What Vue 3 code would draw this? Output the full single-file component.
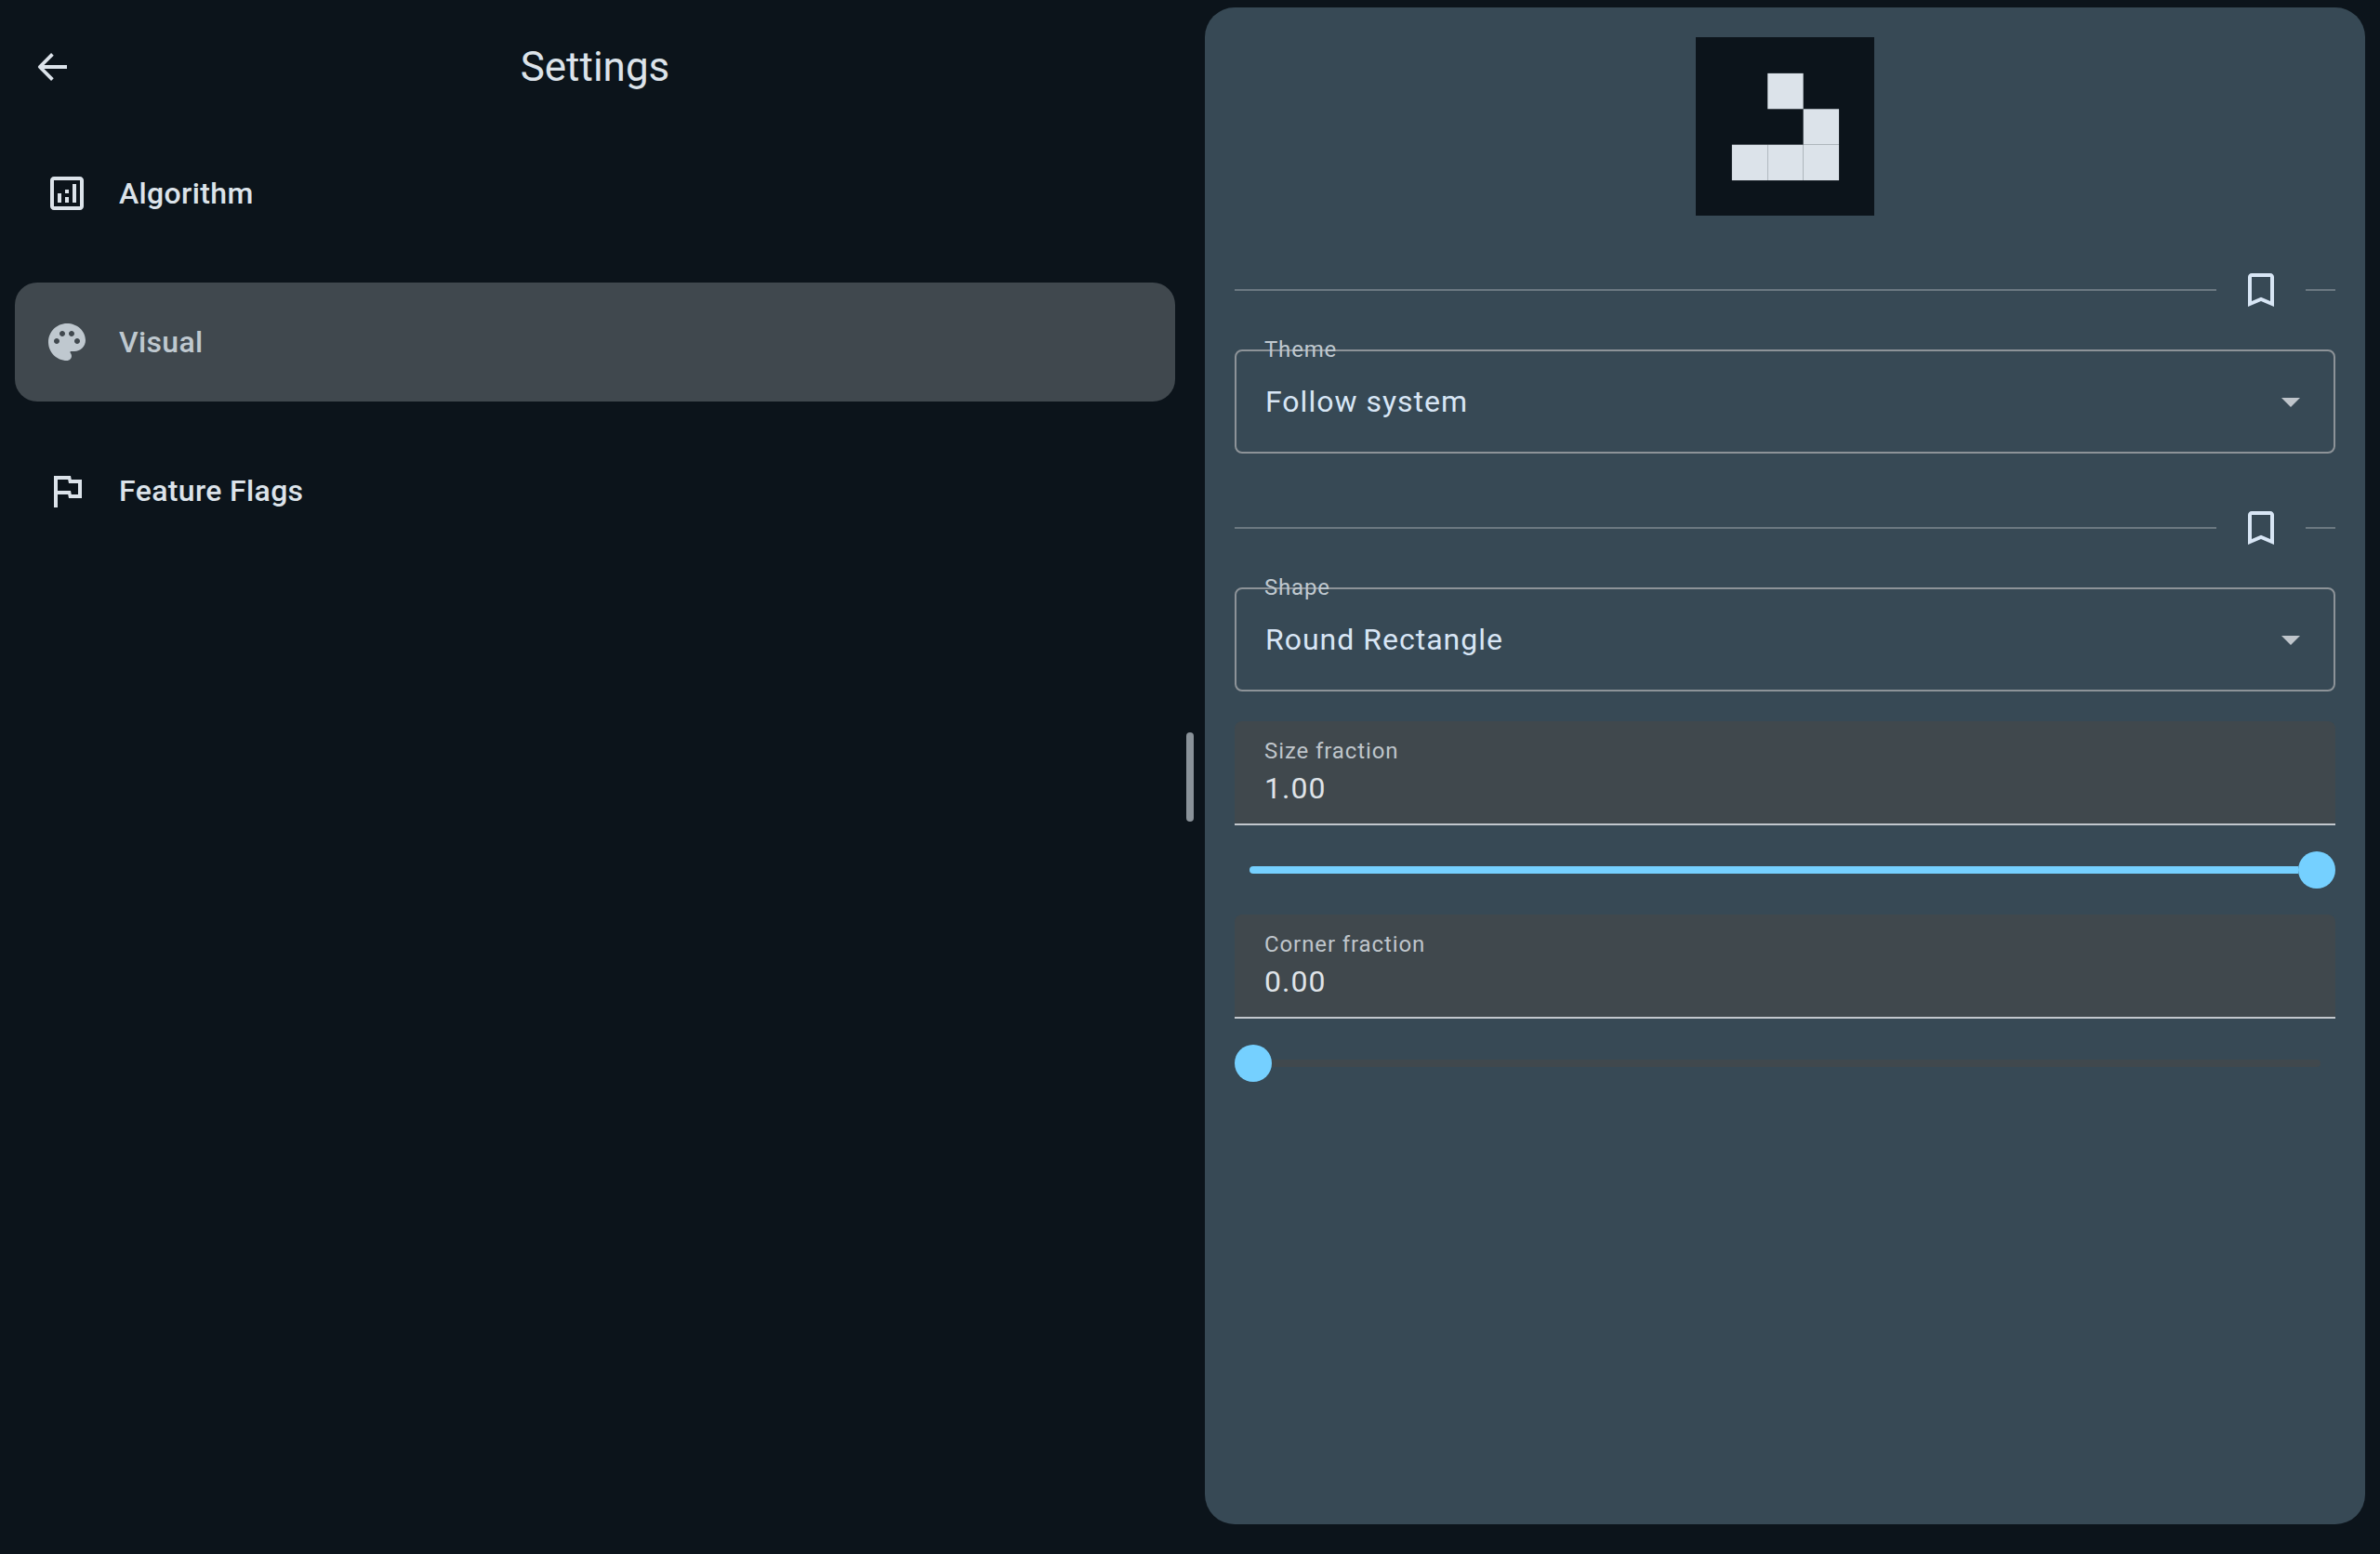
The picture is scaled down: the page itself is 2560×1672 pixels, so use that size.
<script setup>
const menu = [
  { label: 'Algorithm', paths: ['M19 3H5c-1.1 0-2 .9-2 2v14c0 1.1.9 2 2 2h14c1.1 0 2-.9 2-2V5c0-1.1-.9-2-2-2zm0 16H5V5h14v14z', 'M7 12h2v5H7zm8-5h2v10h-2zm-4 7h2v3h-2zm0-4h2v2h-2z'] },
  { label: 'Visual', active: true, paths: ['M12 2C6.49 2 2 6.49 2 12s4.49 10 10 10c1.38 0 2.5-1.12 2.5-2.5 0-.61-.23-1.2-.64-1.67-.08-.1-.13-.21-.13-.33 0-.28.22-.5.5-.5H16c3.31 0 6-2.69 6-6 0-4.96-4.49-9-10-9zm-5.5 11c-.83 0-1.5-.67-1.5-1.5S5.67 10 6.5 10s1.5.67 1.5 1.5S7.33 13 6.5 13zm3-4C8.67 9 8 8.33 8 7.5S8.67 6 9.5 6s1.5.67 1.5 1.5S10.33 9 9.5 9zm5 0c-.83 0-1.5-.67-1.5-1.5S13.67 6 14.5 6s1.5.67 1.5 1.5S15.33 9 14.5 9zm3 4c-.83 0-1.5-.67-1.5-1.5s.67-1.5 1.5-1.5 1.5.67 1.5 1.5-.67 1.5-1.5 1.5z'] },
  { label: 'Feature Flags', paths: ['M14.4 6L14 4H5v17h2v-7h5.6l.4 2h7V6h-5.6zM18 14h-3.6l-.4-2H7V6h5.6l.4 2H18v6z'] }
]
const cells = [[2, 1], [3, 2], [1, 3], [2, 3], [3, 3]]
const bookmark = 'M17 3H7c-1.1 0-2 .9-2 2v16l7-3 7 3V5c0-1.1-.9-2-2-2zm0 15l-5-2.18L7 18V5h10v13z'
</script>

<template>
  <div class="page">
    <section class="left">
      <header class="top">
        <svg class="icon" viewBox="0 0 24 24">
          <path class="arrow" d="M20 12H5.4M12.2 5.2L5.4 12l6.8 6.8" />
        </svg>
        <h1 class="title">Settings</h1>
        <span></span>
      </header>
      <nav class="menu">
        <div v-for="item in menu" :key="item.label" class="row" :class="{ active: item.active }">
          <svg class="icon" viewBox="0 0 24 24"><path v-for="d in item.paths" :key="d" :d="d" /></svg>
          <span class="row-label">{{ item.label }}</span>
        </div>
      </nav>
    </section>

    <div class="handle"></div>

    <section class="panel">
      <svg class="preview" viewBox="0 0 5 5">
        <g transform="translate(0.0125 0.0125)">
          <rect v-for="c in cells" :key="c.join()" :x="c[0]" :y="c[1]" width="1" height="1" />
        </g>
      </svg>

      <div class="divider first">
        <i class="line grow"></i>
        <svg class="icon mark" viewBox="0 0 24 24"><path :d="bookmark" /></svg>
        <i class="line end"></i>
      </div>
      <div class="select">
        <span class="select-label">Theme</span>
        <span class="select-value">Follow system</span>
        <svg class="icon caret" viewBox="0 0 24 24"><path d="M7 10l5 5 5-5z" /></svg>
      </div>

      <div class="divider">
        <i class="line grow"></i>
        <svg class="icon mark" viewBox="0 0 24 24"><path :d="bookmark" /></svg>
        <i class="line end"></i>
      </div>
      <div class="select">
        <span class="select-label">Shape</span>
        <span class="select-value">Round Rectangle</span>
        <svg class="icon caret" viewBox="0 0 24 24"><path d="M7 10l5 5 5-5z" /></svg>
      </div>

      <div class="field spaced">
        <span class="field-label">Size fraction</span>
        <span class="field-value">1.00</span>
      </div>
      <div class="slider full">
        <i class="fill"></i>
        <i class="thumb"></i>
      </div>

      <div class="field">
        <span class="field-label">Corner fraction</span>
        <span class="field-value">0.00</span>
      </div>
      <div class="slider empty">
        <i class="thumb"></i>
        <i class="rest"></i>
      </div>
    </section>
  </div>
</template>

<style>
html, body { margin: 0; background: #0c141b; }
</style>

<style scoped>
.page {
  position: relative;
  display: flex;
  width: 2560px;
  height: 1672px;
  box-sizing: border-box;
  padding: 8px 16px 32px 0;
  background: #0c141b;
  font-family: Roboto, "Noto Sans", sans-serif;
  color: #dce3ea;
  overflow: hidden;
}
.icon { display: block; width: 48px; height: 48px; flex: none; fill: currentColor; }
.arrow { fill: none; stroke: currentColor; stroke-width: 1.9; stroke-linecap: butt; stroke-linejoin: round; }

.left { width: 1280px; flex: none; padding-top: 40px; box-sizing: border-box; }
.top {
  display: grid;
  grid-template-columns: 1fr auto 1fr;
  align-items: center;
  height: 48px;
  padding-left: 32px;
  padding-right: 32px;
}
.title { margin: 0; font-size: 44px; line-height: 48px; font-weight: 400; color: #dce3ea; }
.menu {
  display: flex;
  flex-direction: column;
  gap: 32px;
  margin: 48px 16px 0;
}
.row {
  display: flex;
  align-items: center;
  gap: 32px;
  height: 128px;
  padding-left: 32px;
  border-radius: 24px;
}
.row-label { font-size: 32px; line-height: 48px; font-weight: 500; letter-spacing: 0.35px; }
.row.active { background: #40484e; color: #bfc8cf; }

.handle {
  position: absolute;
  left: 1276px;
  top: 788px;
  width: 8px;
  height: 96px;
  border-radius: 4px;
  background: #8a9299;
}

.panel {
  flex: 1;
  margin-left: 16px;
  display: flex;
  flex-direction: column;
  padding: 32px 32px 0;
  border-radius: 32px;
  background: #374955;
}
.preview {
  display: block;
  align-self: center;
  width: 192px;
  height: 192px;
  flex: none;
  background: #0c141b;
  fill: #dce3ea;
}

.divider { display: flex; align-items: center; height: 48px; margin-top: 56px; color: #d8e6f5; }
.line { display: block; height: 2px; background: #6b7881; }
.grow { flex: 1; }
.end { width: 32px; }
.mark { margin: 0 24px; }

.select {
  position: relative;
  display: flex;
  align-items: center;
  justify-content: space-between;
  height: 112px;
  box-sizing: border-box;
  margin-top: 40px;
  padding: 0 22px 0 31px;
  border: 2px solid #8d9398;
  border-radius: 8px;
}
.select-label {
  position: absolute;
  left: 30px;
  top: -18px;
  font-size: 24px;
  line-height: 32px;
  letter-spacing: 0.8px;
  color: #bfc8cf;
}
.select-value { font-size: 32px; line-height: 48px; letter-spacing: 1px; color: #d8e6f5; }
.caret { color: #bfc5cb; }

.field {
  display: flex;
  flex-direction: column;
  height: 112px;
  box-sizing: border-box;
  padding: 16px 32px 0;
  border-radius: 8px 8px 0 0;
  border-bottom: 2px solid #c2c7cd;
  background: #40484d;
}
.field.spaced { margin-top: 32px; }
.field-label { font-size: 24px; line-height: 32px; letter-spacing: 0.9px; color: #bfc5cb; }
.field-value { font-size: 32px; line-height: 48px; letter-spacing: 1px; color: #dfe3e8; }

.slider { display: flex; align-items: center; height: 96px; flex: none; }
.thumb { display: block; width: 40px; height: 40px; flex: none; border-radius: 50%; background: #75d0ff; }
.fill { display: block; flex: 1; height: 8px; margin-left: 16px; border-radius: 4px 0 0 4px; background: #75d0ff; }
.rest { display: block; flex: 1; height: 8px; margin-right: 16px; border-radius: 0 4px 4px 0; background: #40484d; }
</style>
